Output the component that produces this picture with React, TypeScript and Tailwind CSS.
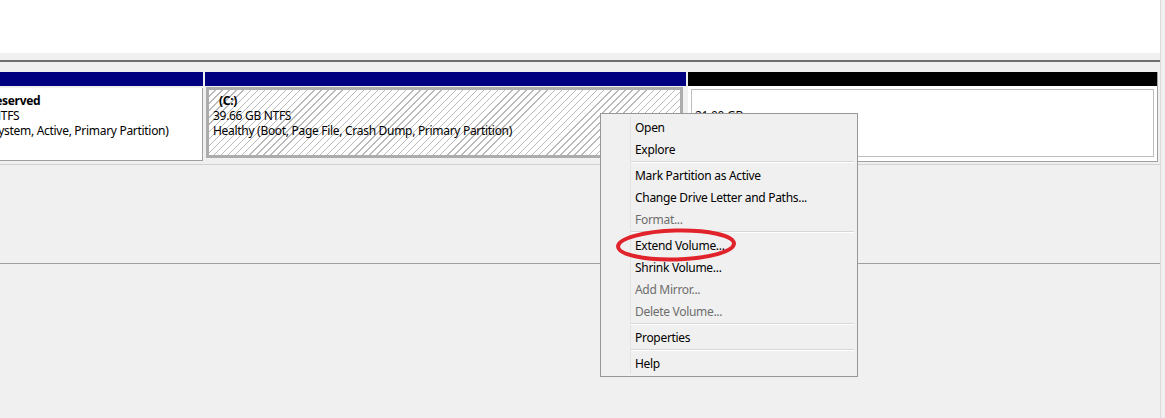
const hatch =
  "bg-[repeating-linear-gradient(135deg,#ffffff_0px,#ffffff_4px,#b9b9b9_4px,#b9b9b9_5px)]";

type Item = { label: string; disabled?: boolean } | "sep";

const menu: Item[] = [
  { label: "Open" },
  { label: "Explore" },
  "sep",
  { label: "Mark Partition as Active" },
  { label: "Change Drive Letter and Paths..." },
  { label: "Format...", disabled: true },
  "sep",
  { label: "Extend Volume..." },
  { label: "Shrink Volume..." },
  { label: "Add Mirror...", disabled: true },
  { label: "Delete Volume...", disabled: true },
  "sep",
  { label: "Properties" },
  "sep",
  { label: "Help" },
];

function ContextMenu() {
  return (
    <div className="absolute left-[600px] top-[113px] w-[258px] border border-[#979797] bg-[#f0f0f0] p-[2px]">
      {menu.map((item, i) =>
        item === "sep" ? (
          <div key={i} className="flex h-[4px]">
            <div className="w-[28px] shrink-0 border-r border-[#e2e3e3]" />
            <div className="flex-1 pr-[1px] pt-[1px]">
              <div className="h-px bg-[#d7d7d7]" />
              <div className="h-px bg-white" />
            </div>
          </div>
        ) : (
          <div key={i} className="flex h-[22px]">
            <div className="w-[28px] shrink-0 border-r border-[#e2e3e3]" />
            <div
              className={`flex items-center pl-[4px] ${
                item.disabled ? "text-[#6d6d6d]" : "text-black"
              }`}
            >
              {item.label}
            </div>
          </div>
        )
      )}
    </div>
  );
}

export default function App() {
  return (
    <div
      className="relative flex h-[418px] w-[1165px] overflow-hidden bg-[#f0f0f0] text-[12px] leading-[15px] tracking-[-0.3px] text-black"
      style={{ fontFamily: '"Noto Sans", "Open Sans", sans-serif' }}
    >
      <div className="flex w-[1160px] flex-col">
        <div className="h-[53px] bg-white" />
        <div className="h-[7px]" />
        <div className="h-[2px] bg-[#6f6f6f]" />
        <div className="h-[10px]" />

        {/* disk row */}
        <div className="flex h-[90px] gap-[2px]">
          {/* System Reserved */}
          <div className="flex w-[203px] flex-col overflow-hidden">
            <div className="h-[14px] bg-[#000080]" />
            <div className="mt-[2px] h-[73px] border-r border-b border-[#a0a0a0] bg-white pt-[5px]">
              <div className="ml-[-8px] whitespace-nowrap">
                <div className="ml-[-49px] font-bold">System Reserved</div>
                <div>NTFS</div>
                <div>System, Active, Primary Partition)</div>
              </div>
            </div>
          </div>

          {/* C: */}
          <div className="flex w-[481px] flex-col">
            <div className="h-[14px] bg-[#000080]" />
            <div
              className={`ml-[1px] mr-[3px] mt-[1px] h-[71px] border-[3px] border-[#acacac] pl-[4px] pt-[3px] ${hatch}`}
            >
              <div className="ml-[6px] font-bold">(C:)</div>
              <div>39.66 GB NTFS</div>
              <div>Healthy (Boot, Page File, Crash Dump, Primary Partition)</div>
            </div>
          </div>

          {/* Unallocated */}
          <div className="flex w-[470px] flex-col border-r border-b border-[#a0a0a0] bg-white">
            <div className="h-[14px] bg-black" />
            <div className="mx-[3px] mt-[3px] h-[68px] border border-[#bdbdbd] pl-[3px] pt-[3px]">
              <div className="h-[15px]" />
              <div>21.00 GB</div>
              <div>Unallocated</div>
            </div>
          </div>
        </div>

        <div className="h-[2px]" />
        <div className="h-px bg-[#d2d2d2]" />
        <div className="h-[98px]" />
        <div className="h-px bg-[#a0a0a0]" />
        <div className="flex-1" />
      </div>
      <div className="w-[5px] border-l border-[#dadada] bg-[#f0f0f0]" />

      <ContextMenu />

      <svg
        className="absolute left-[612px] top-[225px]"
        width="130"
        height="40"
        viewBox="0 0 130 40"
      >
        <ellipse
          cx="64"
          cy="20"
          rx="58"
          ry="14.5"
          fill="none"
          stroke="#e1242c"
          strokeWidth="4"
          transform="rotate(-1.5 64 20)"
        />
      </svg>
    </div>
  );
}
